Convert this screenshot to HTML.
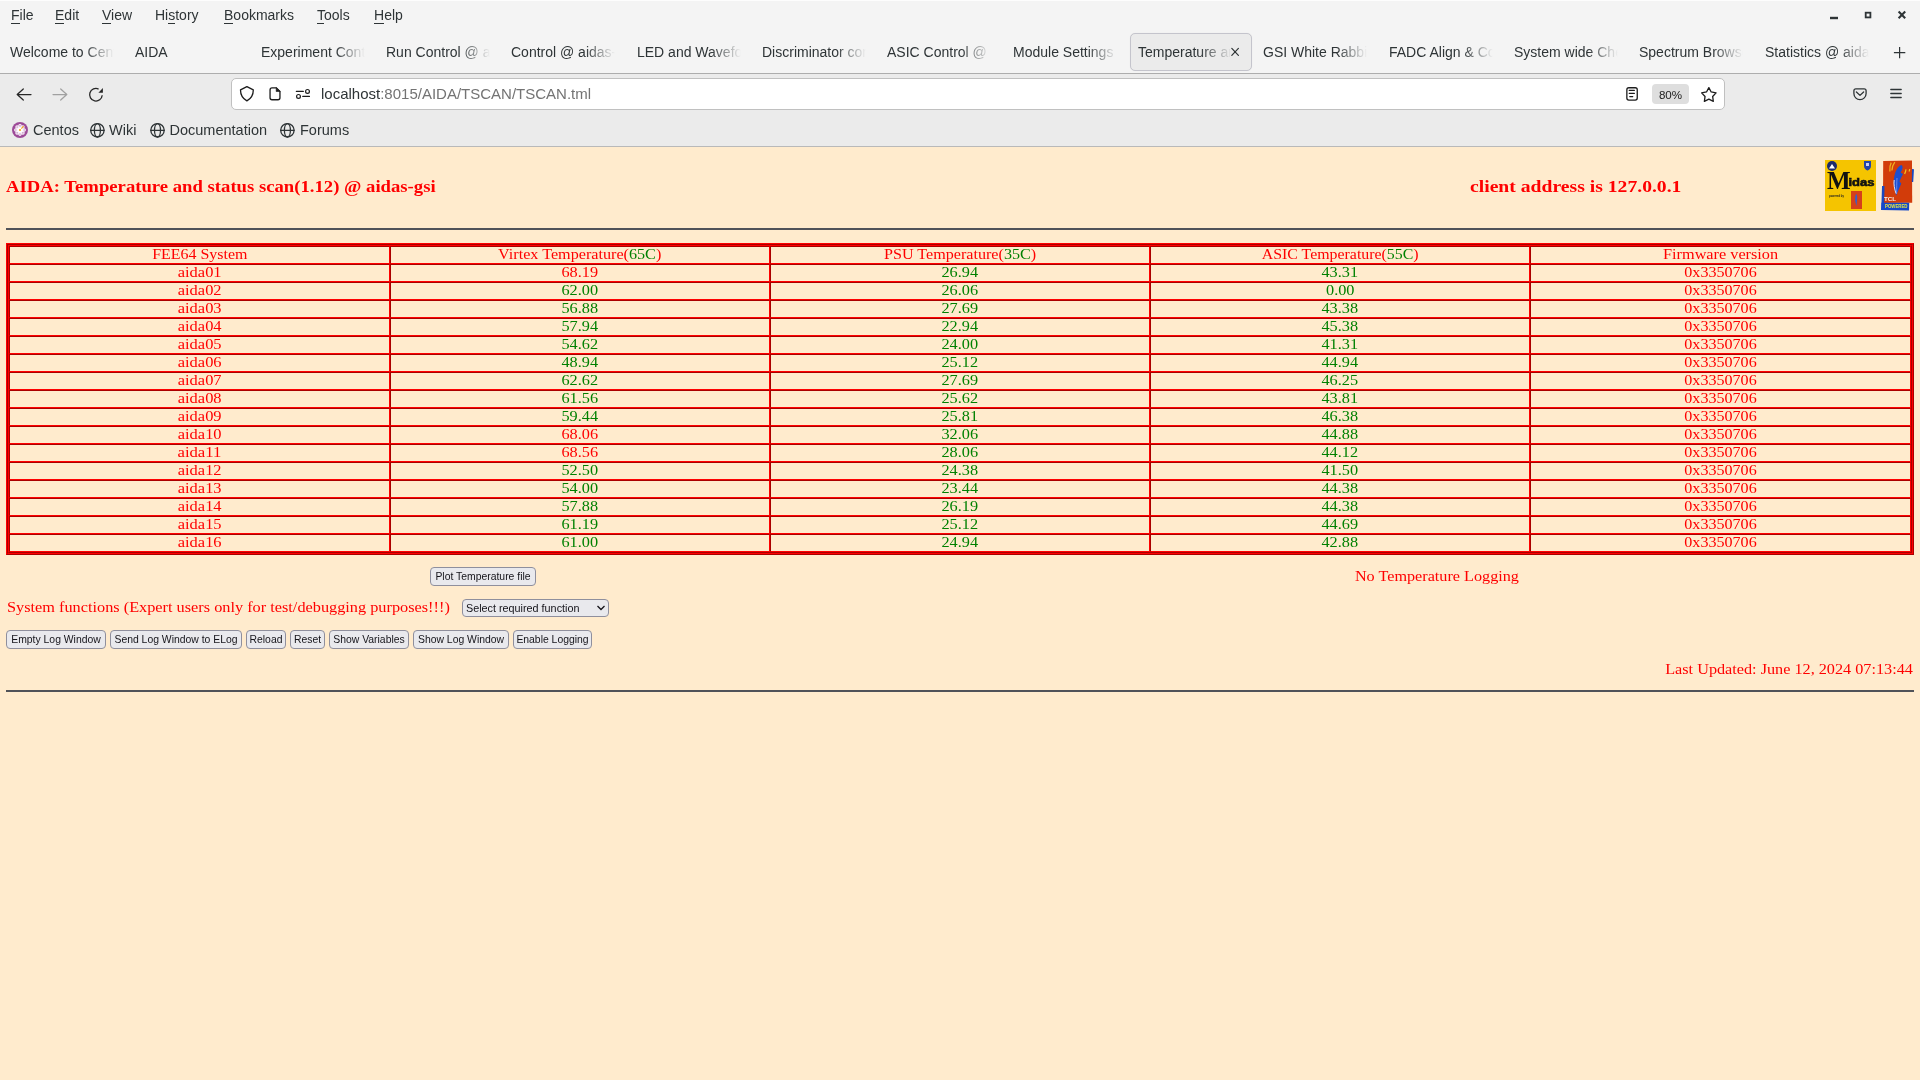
<!DOCTYPE html>
<html><head><meta charset="utf-8">
<style>
*{margin:0;padding:0;box-sizing:border-box}
html,body{width:1920px;height:1080px;overflow:hidden;background:#ffebcd;font-family:"Liberation Sans",sans-serif}
.a{position:absolute;white-space:nowrap}
#wrap{position:absolute;left:0;top:0;width:1920px;height:1080px;will-change:transform}
#top{position:absolute;left:0;top:0;width:1920px;height:73px;background:#f4f4f4}
#l1{position:absolute;left:0;top:73px;width:1920px;height:1px;background:#adadad}
#nav{position:absolute;left:0;top:74px;width:1920px;height:72px;background:#ebebeb}
#l2{position:absolute;left:0;top:146px;width:1920px;height:1px;background:#b9b9b9}
.menu{font-size:14px;color:#2e3436;top:4px;line-height:20px}
.menu u{text-decoration:none;border-bottom:1px solid #2e3436}
.tab{font-size:14px;color:#2e3436;top:42px;line-height:20px;overflow:hidden;width:106px;
 -webkit-mask-image:linear-gradient(to right,#000 74px,transparent 104px)}
.bm{font-size:14.5px;color:#2e3436;top:120px;line-height:20px}
.pg{font-family:"Liberation Serif",serif;color:#f00}
</style></head><body><div id="wrap">
<div id="top"></div><div class="a" style="left:0;top:0;width:1920px;height:1px;background:#fdfdfd"></div><div id="l1"></div><div id="nav"></div><div id="l2"></div>

<!-- menu -->
<div class="a menu" style="top:5px;left:11px"><u>F</u>ile</div>
<div class="a menu" style="top:5px;left:55px"><u>E</u>dit</div>
<div class="a menu" style="top:5px;left:102px"><u>V</u>iew</div>
<div class="a menu" style="top:5px;left:155px">Hi<u>s</u>tory</div>
<div class="a menu" style="top:5px;left:224px"><u>B</u>ookmarks</div>
<div class="a menu" style="top:5px;left:317px"><u>T</u>ools</div>
<div class="a menu" style="top:5px;left:374px"><u>H</u>elp</div>

<!-- window controls -->

<!-- tabs -->
<div class="a tab" style="left:10px">Welcome to CentOS</div>
<div class="a tab" style="left:135px">AIDA</div>
<div class="a tab" style="left:261px">Experiment Control</div>
<div class="a tab" style="left:386px">Run Control @ aidas</div>
<div class="a tab" style="left:511px">Control @ aidas-gsi</div>
<div class="a tab" style="left:637px">LED and Waveform</div>
<div class="a tab" style="left:762px">Discriminator control</div>
<div class="a tab" style="left:887px">ASIC Control @ aidas</div>
<div class="a tab" style="left:1013px">Module Settings @</div>
<div class="a" style="left:1130px;top:33px;width:122px;height:38px;border:1px solid #c4c4cc;border-radius:5px;background:#ebebeb;box-shadow:0 0 1px rgba(0,0,0,.08)"></div>
<div class="a tab" style="left:1138px;width:92px;-webkit-mask-image:linear-gradient(to right,#000 62px,transparent 94px)">Temperature and status</div>
<div class="a tab" style="left:1263px">GSI White Rabbit</div>
<div class="a tab" style="left:1389px">FADC Align &amp; Control</div>
<div class="a tab" style="left:1514px">System wide Checks</div>
<div class="a tab" style="left:1639px">Spectrum Browser</div>
<div class="a tab" style="left:1765px">Statistics @ aidas</div>

<!-- nav -->


<div class="a" style="left:231px;top:78px;width:1494px;height:32px;background:#fff;border:1px solid #c0c0c0;border-radius:5px"></div>
<div class="a" style="left:321px;top:84px;font-size:15px;line-height:20px;color:#2e3436">localhost<span style="color:#737373">:8015/AIDA/TSCAN/TSCAN.tml</span></div>

<div class="a" style="left:1652px;top:84px;width:37px;height:20px;background:#dedede;border-radius:4px;font-size:11.6px;line-height:22px;text-align:center;color:#1c1c1c">80%</div>

<!-- bookmarks -->
<div class="a bm" style="left:33px">Centos</div>
<div class="a bm" style="left:109px">Wiki</div>
<div class="a bm" style="left:169.5px">Documentation</div>
<div class="a bm" style="left:300px">Forums</div>
<svg class="a" style="left:0;top:0" width="1920" height="147" viewBox="0 0 1920 147">
<g fill="none" stroke-linecap="round" stroke-linejoin="round">
<rect x="1830" y="16.8" width="8" height="2.4" fill="#2e3436" stroke="none"/>
<rect x="1865.7" y="12.7" width="4.7" height="4.7" stroke="#2e3436" stroke-width="1.8" stroke-linecap="butt" stroke-linejoin="miter"/>
<path d="M1898.6 11.6L1905.2 18.2M1905.2 11.6L1898.6 18.2" stroke="#2e3436" stroke-width="2.1" stroke-linecap="butt"/>
<path d="M1231.8 48.4L1238.4 55.4M1238.4 48.4L1231.8 55.4" stroke="#2e3436" stroke-width="1.2"/>
<path d="M1899.6 47V58.3M1893.9 52.6H1905.3" stroke="#2e3436" stroke-width="1.2" stroke-linecap="butt"/>
<path d="M17.2 94.5H31M23.3 89L17.2 94.5L23.3 100" stroke="#262626" stroke-width="1.25"/>
<path d="M53 94.5H66.8M60.7 89L66.8 94.5L60.7 100" stroke="#a0a0a0" stroke-width="1.25"/>
<path d="M102.2 95.3A6.3 6.3 0 1 1 98.6 89.05" stroke="#262626" stroke-width="1.3" stroke-linecap="butt"/>
<path d="M98.4 92.7L102.9 88V92.7Z" fill="#262626" stroke="none"/>
<path d="M246.9 86.6L253.3 89.9C253.3 95 251 98.5 246.9 100.9C242.8 98.5 240.5 95 240.5 89.9Z" stroke="#1c1c1c" stroke-width="1.3"/>
<path d="M272.05 87.9H276.4L279.95 91.4V97.75Q279.95 99.75 277.95 99.75H272.05Q270.05 99.75 270.05 97.75V89.9Q270.05 87.9 272.05 87.9Z" stroke="#1c1c1c" stroke-width="1.3"/>
<path d="M276.2 87.9V91.5H279.95Z" fill="#1c1c1c" stroke="#1c1c1c" stroke-width="0.6"/>
<path d="M296.4 91.4H303.3M302.8 96.4H309.4" stroke="#1c1c1c" stroke-width="1.3"/>
<circle cx="307.5" cy="91.4" r="1.9" stroke="#1c1c1c" stroke-width="1.2"/>
<circle cx="298.5" cy="96.4" r="1.9" stroke="#1c1c1c" stroke-width="1.2"/>
<rect x="1626.85" y="87.75" width="10.4" height="12.3" rx="2" stroke="#1c1c1c" stroke-width="1.3"/>
<path d="M1629.2 90.4H1634.4M1629.2 93.4H1634.4M1629.7 96.6H1632.8" stroke="#1c1c1c" stroke-width="1.1"/>
<path d="M1708.85 87.60 L1711.20 91.96 L1716.08 92.85 L1712.65 96.44 L1713.32 101.35 L1708.85 99.20 L1704.38 101.35 L1705.05 96.44 L1701.62 92.85 L1706.50 91.96Z" stroke="#1c1c1c" stroke-width="1.3"/>
<path d="M1853.9 90.8Q1853.9 88.8 1855.9 88.8H1864.1Q1866.1 88.8 1866.1 90.8V93.6A6.1 6.1 0 0 1 1853.9 93.6Z" stroke="#2e3436" stroke-width="1.3"/>
<path d="M1856.4 92L1860 95.4L1863.6 92" stroke="#2e3436" stroke-width="1.3"/>
<path d="M1890.8 89.5H1901.2M1890.8 93.5H1901.2M1890.8 97.5H1901.2" stroke="#2e3436" stroke-width="1.3"/>
<g stroke="#2e3436" stroke-width="1.3"><circle cx="97.4" cy="130.3" r="6.7"/><ellipse cx="97.4" cy="130.3" rx="3" ry="6.7"/><path d="M90.7 130.3H104.10000000000001"/><circle cx="157.5" cy="130.3" r="6.7"/><ellipse cx="157.5" cy="130.3" rx="3" ry="6.7"/><path d="M150.8 130.3H164.2"/><circle cx="287.4" cy="130.3" r="6.7"/><ellipse cx="287.4" cy="130.3" rx="3" ry="6.7"/><path d="M280.7 130.3H294.09999999999997"/></g>
</g>
<circle cx="20" cy="130" r="8" fill="#9d4b98"/>
<circle cx="24.10" cy="130.00" r="1.8" fill="#fff"/><circle cx="22.90" cy="132.90" r="1.8" fill="#fff"/><circle cx="20.00" cy="134.10" r="1.8" fill="#fff"/><circle cx="17.10" cy="132.90" r="1.8" fill="#fff"/><circle cx="15.90" cy="130.00" r="1.8" fill="#fff"/><circle cx="17.10" cy="127.10" r="1.8" fill="#fff"/><circle cx="20.00" cy="125.90" r="1.8" fill="#fff"/><circle cx="22.90" cy="127.10" r="1.8" fill="#fff"/><circle cx="20" cy="130" r="3.0" fill="#fff"/><circle cx="24.10" cy="130.00" r="0.8" fill="#c08ac0"/><circle cx="22.90" cy="132.90" r="0.8" fill="#c08ac0"/><circle cx="20.00" cy="134.10" r="0.8" fill="#c08ac0"/><circle cx="17.10" cy="132.90" r="0.8" fill="#c08ac0"/><circle cx="15.90" cy="130.00" r="0.8" fill="#c08ac0"/><circle cx="17.10" cy="127.10" r="0.8" fill="#c08ac0"/><circle cx="20.00" cy="125.90" r="0.8" fill="#c08ac0"/><circle cx="22.90" cy="127.10" r="0.8" fill="#c08ac0"/>
<circle cx="20" cy="130" r="1.1" fill="#f0a820"/><path d="M21.3 128.7L23.6 126.2" stroke="#f0a820" stroke-width="1.1"/>
</svg>
<!-- PAGE -->
<div class="a pg" style="top:176.78px;font-size:16.5px;line-height:20px;color:#ff0000;font-weight:bold;left:6px;"><span style="display:inline-block;transform:scaleX(1.1323);transform-origin:left">AIDA: Temperature and status scan(1.12) @ aidas-gsi</span></div>
<div class="a pg" style="top:176.78px;font-size:16.5px;line-height:20px;color:#ff0000;font-weight:bold;left:1470px;"><span style="display:inline-block;transform:scaleX(1.1909);transform-origin:left">client address is 127.0.0.1</span></div>
<svg class="a" style="left:1825px;top:160px" width="51" height="51" viewBox="0 0 51 51">
<rect width="51" height="51" fill="#f5c400"/>
<circle cx="7" cy="6" r="5" fill="#1c2b6b"/><path d="M4 8.5L7 4L10 8.5Z" fill="#fff"/>
<path d="M39 1H46V6C46 8.5 44 10 42.5 10.5C41 10 39 8.5 39 6Z" fill="#2244a8"/><path d="M41 3H44V6H41Z" fill="#c8d0f0"/>
<text x="2" y="29" font-family="Liberation Serif" font-weight="bold" font-size="25" fill="#111">M</text>
<text x="23.5" y="26" font-family="Liberation Sans" font-weight="bold" font-size="11" fill="#111" stroke="#111" stroke-width="0.6" textLength="26" lengthAdjust="spacingAndGlyphs">idas</text>
<text x="4" y="36.5" font-family="Liberation Sans" font-weight="bold" font-size="3.6" fill="#222" textLength="15" lengthAdjust="spacingAndGlyphs">powered by</text>
<rect x="26" y="31" width="11" height="18" fill="#d5401a"/>
<path d="M31 34C33 35 32 40 31.5 46C30 42 29.5 37 31 34Z" fill="#3060d0"/>
</svg>
<svg class="a" style="left:1878px;top:156px" width="40" height="58" viewBox="0 0 40 58">
<path d="M5.2 4.9L34 4.6L34.2 46.8L5 47Z" fill="#d23c0a"/>
<path d="M4 30L6.5 30L6.2 47L3.5 47Z" fill="#1a48c0"/>
<path d="M34 13L36 13.2L35.2 26L33.8 26Z" fill="#1a48c0"/>
<path d="M13.2 6.6Q11.4 10 11.9 15.5M16.8 6.2Q14.2 9.5 13.9 14.5" stroke="#f0b020" stroke-width="1.3" fill="none"/>
<path d="M28 13.4C27.8 15 27.3 16.5 26.6 18M31.7 13C31.6 14 31.4 14.8 31 15.6" stroke="#f4c020" stroke-width="1.2" fill="none"/>
<path d="M23.2 9C25.6 10 24.6 13.5 22.6 16.5L25 18C23.5 21 22 23.5 21.5 25.5L23.3 27.5C21.8 31 19.8 35 18.3 39.5C16.6 35 15.6 30 15.8 25C16.2 18 18.4 11.5 23.2 9Z" fill="#1c4ed0"/>
<path d="M16.2 24C15.5 28 16.5 33 18 37.5" stroke="#f4f0f0" stroke-width="0.9" fill="none"/>
<path d="M19 22C18.6 27 18.8 32 18.6 38" stroke="#9ab0ff" stroke-width="0.6" fill="none"/>
<text x="6" y="44.7" font-family="Liberation Sans" font-weight="bold" font-size="6" fill="#f8eee8" textLength="12" lengthAdjust="spacingAndGlyphs">TCL</text>
<path d="M3.2 46.8L31.2 46.8L31 54.5L3 54Z" fill="#1448c8"/>
<text x="7" y="52.2" font-family="Liberation Sans" font-weight="bold" font-size="5" fill="#e8e840" textLength="22.5" lengthAdjust="spacingAndGlyphs">POWERED</text>
</svg>
<div class="a" style="left:6px;top:243px;width:1908px;height:312px;border-style:solid;border-width:1px;border-color:#ff0000 #aa0000 #aa0000 #ff0000"></div>
<div class="a" style="left:7px;top:244px;width:1906px;height:310px;border-style:solid;border-width:1px;border-color:#aa0000 #ff0000 #ff0000 #aa0000"></div>
<div class="a" style="left:8px;top:245px;width:1904px;height:308px;border-style:solid;border-width:1px;border-color:#ff0000 #aa0000 #aa0000 #ff0000"></div>
<div class="a" style="left:9px;top:246px;width:381px;height:18px;border-style:solid;border-width:1px;border-color:#aa0000 #ff0000 #ff0000 #aa0000"></div><div class="a" style="left:390px;top:246px;width:380px;height:18px;border-style:solid;border-width:1px;border-color:#aa0000 #ff0000 #ff0000 #aa0000"></div><div class="a" style="left:770px;top:246px;width:380px;height:18px;border-style:solid;border-width:1px;border-color:#aa0000 #ff0000 #ff0000 #aa0000"></div><div class="a" style="left:1150px;top:246px;width:380px;height:18px;border-style:solid;border-width:1px;border-color:#aa0000 #ff0000 #ff0000 #aa0000"></div><div class="a" style="left:1530px;top:246px;width:381px;height:18px;border-style:solid;border-width:1px;border-color:#aa0000 #ff0000 #ff0000 #aa0000"></div><div class="a" style="left:9px;top:264px;width:381px;height:18px;border-style:solid;border-width:1px;border-color:#aa0000 #ff0000 #ff0000 #aa0000"></div><div class="a" style="left:390px;top:264px;width:380px;height:18px;border-style:solid;border-width:1px;border-color:#aa0000 #ff0000 #ff0000 #aa0000"></div><div class="a" style="left:770px;top:264px;width:380px;height:18px;border-style:solid;border-width:1px;border-color:#aa0000 #ff0000 #ff0000 #aa0000"></div><div class="a" style="left:1150px;top:264px;width:380px;height:18px;border-style:solid;border-width:1px;border-color:#aa0000 #ff0000 #ff0000 #aa0000"></div><div class="a" style="left:1530px;top:264px;width:381px;height:18px;border-style:solid;border-width:1px;border-color:#aa0000 #ff0000 #ff0000 #aa0000"></div><div class="a" style="left:9px;top:282px;width:381px;height:18px;border-style:solid;border-width:1px;border-color:#aa0000 #ff0000 #ff0000 #aa0000"></div><div class="a" style="left:390px;top:282px;width:380px;height:18px;border-style:solid;border-width:1px;border-color:#aa0000 #ff0000 #ff0000 #aa0000"></div><div class="a" style="left:770px;top:282px;width:380px;height:18px;border-style:solid;border-width:1px;border-color:#aa0000 #ff0000 #ff0000 #aa0000"></div><div class="a" style="left:1150px;top:282px;width:380px;height:18px;border-style:solid;border-width:1px;border-color:#aa0000 #ff0000 #ff0000 #aa0000"></div><div class="a" style="left:1530px;top:282px;width:381px;height:18px;border-style:solid;border-width:1px;border-color:#aa0000 #ff0000 #ff0000 #aa0000"></div><div class="a" style="left:9px;top:300px;width:381px;height:18px;border-style:solid;border-width:1px;border-color:#aa0000 #ff0000 #ff0000 #aa0000"></div><div class="a" style="left:390px;top:300px;width:380px;height:18px;border-style:solid;border-width:1px;border-color:#aa0000 #ff0000 #ff0000 #aa0000"></div><div class="a" style="left:770px;top:300px;width:380px;height:18px;border-style:solid;border-width:1px;border-color:#aa0000 #ff0000 #ff0000 #aa0000"></div><div class="a" style="left:1150px;top:300px;width:380px;height:18px;border-style:solid;border-width:1px;border-color:#aa0000 #ff0000 #ff0000 #aa0000"></div><div class="a" style="left:1530px;top:300px;width:381px;height:18px;border-style:solid;border-width:1px;border-color:#aa0000 #ff0000 #ff0000 #aa0000"></div><div class="a" style="left:9px;top:318px;width:381px;height:18px;border-style:solid;border-width:1px;border-color:#aa0000 #ff0000 #ff0000 #aa0000"></div><div class="a" style="left:390px;top:318px;width:380px;height:18px;border-style:solid;border-width:1px;border-color:#aa0000 #ff0000 #ff0000 #aa0000"></div><div class="a" style="left:770px;top:318px;width:380px;height:18px;border-style:solid;border-width:1px;border-color:#aa0000 #ff0000 #ff0000 #aa0000"></div><div class="a" style="left:1150px;top:318px;width:380px;height:18px;border-style:solid;border-width:1px;border-color:#aa0000 #ff0000 #ff0000 #aa0000"></div><div class="a" style="left:1530px;top:318px;width:381px;height:18px;border-style:solid;border-width:1px;border-color:#aa0000 #ff0000 #ff0000 #aa0000"></div><div class="a" style="left:9px;top:336px;width:381px;height:18px;border-style:solid;border-width:1px;border-color:#aa0000 #ff0000 #ff0000 #aa0000"></div><div class="a" style="left:390px;top:336px;width:380px;height:18px;border-style:solid;border-width:1px;border-color:#aa0000 #ff0000 #ff0000 #aa0000"></div><div class="a" style="left:770px;top:336px;width:380px;height:18px;border-style:solid;border-width:1px;border-color:#aa0000 #ff0000 #ff0000 #aa0000"></div><div class="a" style="left:1150px;top:336px;width:380px;height:18px;border-style:solid;border-width:1px;border-color:#aa0000 #ff0000 #ff0000 #aa0000"></div><div class="a" style="left:1530px;top:336px;width:381px;height:18px;border-style:solid;border-width:1px;border-color:#aa0000 #ff0000 #ff0000 #aa0000"></div><div class="a" style="left:9px;top:354px;width:381px;height:18px;border-style:solid;border-width:1px;border-color:#aa0000 #ff0000 #ff0000 #aa0000"></div><div class="a" style="left:390px;top:354px;width:380px;height:18px;border-style:solid;border-width:1px;border-color:#aa0000 #ff0000 #ff0000 #aa0000"></div><div class="a" style="left:770px;top:354px;width:380px;height:18px;border-style:solid;border-width:1px;border-color:#aa0000 #ff0000 #ff0000 #aa0000"></div><div class="a" style="left:1150px;top:354px;width:380px;height:18px;border-style:solid;border-width:1px;border-color:#aa0000 #ff0000 #ff0000 #aa0000"></div><div class="a" style="left:1530px;top:354px;width:381px;height:18px;border-style:solid;border-width:1px;border-color:#aa0000 #ff0000 #ff0000 #aa0000"></div><div class="a" style="left:9px;top:372px;width:381px;height:18px;border-style:solid;border-width:1px;border-color:#aa0000 #ff0000 #ff0000 #aa0000"></div><div class="a" style="left:390px;top:372px;width:380px;height:18px;border-style:solid;border-width:1px;border-color:#aa0000 #ff0000 #ff0000 #aa0000"></div><div class="a" style="left:770px;top:372px;width:380px;height:18px;border-style:solid;border-width:1px;border-color:#aa0000 #ff0000 #ff0000 #aa0000"></div><div class="a" style="left:1150px;top:372px;width:380px;height:18px;border-style:solid;border-width:1px;border-color:#aa0000 #ff0000 #ff0000 #aa0000"></div><div class="a" style="left:1530px;top:372px;width:381px;height:18px;border-style:solid;border-width:1px;border-color:#aa0000 #ff0000 #ff0000 #aa0000"></div><div class="a" style="left:9px;top:390px;width:381px;height:18px;border-style:solid;border-width:1px;border-color:#aa0000 #ff0000 #ff0000 #aa0000"></div><div class="a" style="left:390px;top:390px;width:380px;height:18px;border-style:solid;border-width:1px;border-color:#aa0000 #ff0000 #ff0000 #aa0000"></div><div class="a" style="left:770px;top:390px;width:380px;height:18px;border-style:solid;border-width:1px;border-color:#aa0000 #ff0000 #ff0000 #aa0000"></div><div class="a" style="left:1150px;top:390px;width:380px;height:18px;border-style:solid;border-width:1px;border-color:#aa0000 #ff0000 #ff0000 #aa0000"></div><div class="a" style="left:1530px;top:390px;width:381px;height:18px;border-style:solid;border-width:1px;border-color:#aa0000 #ff0000 #ff0000 #aa0000"></div><div class="a" style="left:9px;top:408px;width:381px;height:18px;border-style:solid;border-width:1px;border-color:#aa0000 #ff0000 #ff0000 #aa0000"></div><div class="a" style="left:390px;top:408px;width:380px;height:18px;border-style:solid;border-width:1px;border-color:#aa0000 #ff0000 #ff0000 #aa0000"></div><div class="a" style="left:770px;top:408px;width:380px;height:18px;border-style:solid;border-width:1px;border-color:#aa0000 #ff0000 #ff0000 #aa0000"></div><div class="a" style="left:1150px;top:408px;width:380px;height:18px;border-style:solid;border-width:1px;border-color:#aa0000 #ff0000 #ff0000 #aa0000"></div><div class="a" style="left:1530px;top:408px;width:381px;height:18px;border-style:solid;border-width:1px;border-color:#aa0000 #ff0000 #ff0000 #aa0000"></div><div class="a" style="left:9px;top:426px;width:381px;height:18px;border-style:solid;border-width:1px;border-color:#aa0000 #ff0000 #ff0000 #aa0000"></div><div class="a" style="left:390px;top:426px;width:380px;height:18px;border-style:solid;border-width:1px;border-color:#aa0000 #ff0000 #ff0000 #aa0000"></div><div class="a" style="left:770px;top:426px;width:380px;height:18px;border-style:solid;border-width:1px;border-color:#aa0000 #ff0000 #ff0000 #aa0000"></div><div class="a" style="left:1150px;top:426px;width:380px;height:18px;border-style:solid;border-width:1px;border-color:#aa0000 #ff0000 #ff0000 #aa0000"></div><div class="a" style="left:1530px;top:426px;width:381px;height:18px;border-style:solid;border-width:1px;border-color:#aa0000 #ff0000 #ff0000 #aa0000"></div><div class="a" style="left:9px;top:444px;width:381px;height:18px;border-style:solid;border-width:1px;border-color:#aa0000 #ff0000 #ff0000 #aa0000"></div><div class="a" style="left:390px;top:444px;width:380px;height:18px;border-style:solid;border-width:1px;border-color:#aa0000 #ff0000 #ff0000 #aa0000"></div><div class="a" style="left:770px;top:444px;width:380px;height:18px;border-style:solid;border-width:1px;border-color:#aa0000 #ff0000 #ff0000 #aa0000"></div><div class="a" style="left:1150px;top:444px;width:380px;height:18px;border-style:solid;border-width:1px;border-color:#aa0000 #ff0000 #ff0000 #aa0000"></div><div class="a" style="left:1530px;top:444px;width:381px;height:18px;border-style:solid;border-width:1px;border-color:#aa0000 #ff0000 #ff0000 #aa0000"></div><div class="a" style="left:9px;top:462px;width:381px;height:18px;border-style:solid;border-width:1px;border-color:#aa0000 #ff0000 #ff0000 #aa0000"></div><div class="a" style="left:390px;top:462px;width:380px;height:18px;border-style:solid;border-width:1px;border-color:#aa0000 #ff0000 #ff0000 #aa0000"></div><div class="a" style="left:770px;top:462px;width:380px;height:18px;border-style:solid;border-width:1px;border-color:#aa0000 #ff0000 #ff0000 #aa0000"></div><div class="a" style="left:1150px;top:462px;width:380px;height:18px;border-style:solid;border-width:1px;border-color:#aa0000 #ff0000 #ff0000 #aa0000"></div><div class="a" style="left:1530px;top:462px;width:381px;height:18px;border-style:solid;border-width:1px;border-color:#aa0000 #ff0000 #ff0000 #aa0000"></div><div class="a" style="left:9px;top:480px;width:381px;height:18px;border-style:solid;border-width:1px;border-color:#aa0000 #ff0000 #ff0000 #aa0000"></div><div class="a" style="left:390px;top:480px;width:380px;height:18px;border-style:solid;border-width:1px;border-color:#aa0000 #ff0000 #ff0000 #aa0000"></div><div class="a" style="left:770px;top:480px;width:380px;height:18px;border-style:solid;border-width:1px;border-color:#aa0000 #ff0000 #ff0000 #aa0000"></div><div class="a" style="left:1150px;top:480px;width:380px;height:18px;border-style:solid;border-width:1px;border-color:#aa0000 #ff0000 #ff0000 #aa0000"></div><div class="a" style="left:1530px;top:480px;width:381px;height:18px;border-style:solid;border-width:1px;border-color:#aa0000 #ff0000 #ff0000 #aa0000"></div><div class="a" style="left:9px;top:498px;width:381px;height:18px;border-style:solid;border-width:1px;border-color:#aa0000 #ff0000 #ff0000 #aa0000"></div><div class="a" style="left:390px;top:498px;width:380px;height:18px;border-style:solid;border-width:1px;border-color:#aa0000 #ff0000 #ff0000 #aa0000"></div><div class="a" style="left:770px;top:498px;width:380px;height:18px;border-style:solid;border-width:1px;border-color:#aa0000 #ff0000 #ff0000 #aa0000"></div><div class="a" style="left:1150px;top:498px;width:380px;height:18px;border-style:solid;border-width:1px;border-color:#aa0000 #ff0000 #ff0000 #aa0000"></div><div class="a" style="left:1530px;top:498px;width:381px;height:18px;border-style:solid;border-width:1px;border-color:#aa0000 #ff0000 #ff0000 #aa0000"></div><div class="a" style="left:9px;top:516px;width:381px;height:18px;border-style:solid;border-width:1px;border-color:#aa0000 #ff0000 #ff0000 #aa0000"></div><div class="a" style="left:390px;top:516px;width:380px;height:18px;border-style:solid;border-width:1px;border-color:#aa0000 #ff0000 #ff0000 #aa0000"></div><div class="a" style="left:770px;top:516px;width:380px;height:18px;border-style:solid;border-width:1px;border-color:#aa0000 #ff0000 #ff0000 #aa0000"></div><div class="a" style="left:1150px;top:516px;width:380px;height:18px;border-style:solid;border-width:1px;border-color:#aa0000 #ff0000 #ff0000 #aa0000"></div><div class="a" style="left:1530px;top:516px;width:381px;height:18px;border-style:solid;border-width:1px;border-color:#aa0000 #ff0000 #ff0000 #aa0000"></div><div class="a" style="left:9px;top:534px;width:381px;height:18px;border-style:solid;border-width:1px;border-color:#aa0000 #ff0000 #ff0000 #aa0000"></div><div class="a" style="left:390px;top:534px;width:380px;height:18px;border-style:solid;border-width:1px;border-color:#aa0000 #ff0000 #ff0000 #aa0000"></div><div class="a" style="left:770px;top:534px;width:380px;height:18px;border-style:solid;border-width:1px;border-color:#aa0000 #ff0000 #ff0000 #aa0000"></div><div class="a" style="left:1150px;top:534px;width:380px;height:18px;border-style:solid;border-width:1px;border-color:#aa0000 #ff0000 #ff0000 #aa0000"></div><div class="a" style="left:1530px;top:534px;width:381px;height:18px;border-style:solid;border-width:1px;border-color:#aa0000 #ff0000 #ff0000 #aa0000"></div>
<div class="a pg" style="top:245.28px;font-size:14.0px;line-height:20px;color:#ff0000;left:-300.5px;width:1000px;text-align:center;"><span style="display:inline-block;transform:scaleX(1.1402);transform-origin:center">FEE64 System</span></div>
<div class="a pg" style="top:245.28px;font-size:14.0px;line-height:20px;color:#ff0000;left:80.0px;width:1000px;text-align:center;"><span style="display:inline-block;transform:scaleX(1.1542);transform-origin:center">Virtex Temperature(<span style="color:#008000">65C</span>)</span></div>
<div class="a pg" style="top:245.28px;font-size:14.0px;line-height:20px;color:#ff0000;left:460.0px;width:1000px;text-align:center;"><span style="display:inline-block;transform:scaleX(1.1516);transform-origin:center">PSU Temperature(<span style="color:#008000">35C</span>)</span></div>
<div class="a pg" style="top:245.28px;font-size:14.0px;line-height:20px;color:#ff0000;left:840.0px;width:1000px;text-align:center;"><span style="display:inline-block;transform:scaleX(1.1339);transform-origin:center">ASIC Temperature(<span style="color:#008000">55C</span>)</span></div>
<div class="a pg" style="top:245.28px;font-size:14.0px;line-height:20px;color:#ff0000;left:1220.5px;width:1000px;text-align:center;"><span style="display:inline-block;transform:scaleX(1.1611);transform-origin:center">Firmware version</span></div>
<div class="a pg" style="top:263.27px;font-size:14.0px;line-height:20px;color:#ff0000;left:-300.5px;width:1000px;text-align:center;"><span style="display:inline-block;transform:scaleX(1.1737);transform-origin:center">aida01</span></div>
<div class="a pg" style="top:263.27px;font-size:14.0px;line-height:20px;color:#ff0000;left:80.0px;width:1000px;text-align:center;"><span style="display:inline-block;transform:scaleX(1.1627);transform-origin:center">68.19</span></div>
<div class="a pg" style="top:263.27px;font-size:14.0px;line-height:20px;color:#008000;left:460.0px;width:1000px;text-align:center;"><span style="display:inline-block;transform:scaleX(1.1627);transform-origin:center">26.94</span></div>
<div class="a pg" style="top:263.27px;font-size:14.0px;line-height:20px;color:#008000;left:840.0px;width:1000px;text-align:center;"><span style="display:inline-block;transform:scaleX(1.1627);transform-origin:center">43.31</span></div>
<div class="a pg" style="top:263.27px;font-size:14.0px;line-height:20px;color:#ff0000;left:1220.5px;width:1000px;text-align:center;"><span style="display:inline-block;transform:scaleX(1.1483);transform-origin:center">0x3350706</span></div>
<div class="a pg" style="top:281.27px;font-size:14.0px;line-height:20px;color:#ff0000;left:-300.5px;width:1000px;text-align:center;"><span style="display:inline-block;transform:scaleX(1.1737);transform-origin:center">aida02</span></div>
<div class="a pg" style="top:281.27px;font-size:14.0px;line-height:20px;color:#008000;left:80.0px;width:1000px;text-align:center;"><span style="display:inline-block;transform:scaleX(1.1627);transform-origin:center">62.00</span></div>
<div class="a pg" style="top:281.27px;font-size:14.0px;line-height:20px;color:#008000;left:460.0px;width:1000px;text-align:center;"><span style="display:inline-block;transform:scaleX(1.1627);transform-origin:center">26.06</span></div>
<div class="a pg" style="top:281.27px;font-size:14.0px;line-height:20px;color:#008000;left:840.0px;width:1000px;text-align:center;"><span style="display:inline-block;transform:scaleX(1.1626);transform-origin:center">0.00</span></div>
<div class="a pg" style="top:281.27px;font-size:14.0px;line-height:20px;color:#ff0000;left:1220.5px;width:1000px;text-align:center;"><span style="display:inline-block;transform:scaleX(1.1483);transform-origin:center">0x3350706</span></div>
<div class="a pg" style="top:299.27px;font-size:14.0px;line-height:20px;color:#ff0000;left:-300.5px;width:1000px;text-align:center;"><span style="display:inline-block;transform:scaleX(1.1737);transform-origin:center">aida03</span></div>
<div class="a pg" style="top:299.27px;font-size:14.0px;line-height:20px;color:#008000;left:80.0px;width:1000px;text-align:center;"><span style="display:inline-block;transform:scaleX(1.1627);transform-origin:center">56.88</span></div>
<div class="a pg" style="top:299.27px;font-size:14.0px;line-height:20px;color:#008000;left:460.0px;width:1000px;text-align:center;"><span style="display:inline-block;transform:scaleX(1.1627);transform-origin:center">27.69</span></div>
<div class="a pg" style="top:299.27px;font-size:14.0px;line-height:20px;color:#008000;left:840.0px;width:1000px;text-align:center;"><span style="display:inline-block;transform:scaleX(1.1627);transform-origin:center">43.38</span></div>
<div class="a pg" style="top:299.27px;font-size:14.0px;line-height:20px;color:#ff0000;left:1220.5px;width:1000px;text-align:center;"><span style="display:inline-block;transform:scaleX(1.1483);transform-origin:center">0x3350706</span></div>
<div class="a pg" style="top:317.27px;font-size:14.0px;line-height:20px;color:#ff0000;left:-300.5px;width:1000px;text-align:center;"><span style="display:inline-block;transform:scaleX(1.1737);transform-origin:center">aida04</span></div>
<div class="a pg" style="top:317.27px;font-size:14.0px;line-height:20px;color:#008000;left:80.0px;width:1000px;text-align:center;"><span style="display:inline-block;transform:scaleX(1.1627);transform-origin:center">57.94</span></div>
<div class="a pg" style="top:317.27px;font-size:14.0px;line-height:20px;color:#008000;left:460.0px;width:1000px;text-align:center;"><span style="display:inline-block;transform:scaleX(1.1627);transform-origin:center">22.94</span></div>
<div class="a pg" style="top:317.27px;font-size:14.0px;line-height:20px;color:#008000;left:840.0px;width:1000px;text-align:center;"><span style="display:inline-block;transform:scaleX(1.1627);transform-origin:center">45.38</span></div>
<div class="a pg" style="top:317.27px;font-size:14.0px;line-height:20px;color:#ff0000;left:1220.5px;width:1000px;text-align:center;"><span style="display:inline-block;transform:scaleX(1.1483);transform-origin:center">0x3350706</span></div>
<div class="a pg" style="top:335.27px;font-size:14.0px;line-height:20px;color:#ff0000;left:-300.5px;width:1000px;text-align:center;"><span style="display:inline-block;transform:scaleX(1.1737);transform-origin:center">aida05</span></div>
<div class="a pg" style="top:335.27px;font-size:14.0px;line-height:20px;color:#008000;left:80.0px;width:1000px;text-align:center;"><span style="display:inline-block;transform:scaleX(1.1627);transform-origin:center">54.62</span></div>
<div class="a pg" style="top:335.27px;font-size:14.0px;line-height:20px;color:#008000;left:460.0px;width:1000px;text-align:center;"><span style="display:inline-block;transform:scaleX(1.1627);transform-origin:center">24.00</span></div>
<div class="a pg" style="top:335.27px;font-size:14.0px;line-height:20px;color:#008000;left:840.0px;width:1000px;text-align:center;"><span style="display:inline-block;transform:scaleX(1.1627);transform-origin:center">41.31</span></div>
<div class="a pg" style="top:335.27px;font-size:14.0px;line-height:20px;color:#ff0000;left:1220.5px;width:1000px;text-align:center;"><span style="display:inline-block;transform:scaleX(1.1483);transform-origin:center">0x3350706</span></div>
<div class="a pg" style="top:353.27px;font-size:14.0px;line-height:20px;color:#ff0000;left:-300.5px;width:1000px;text-align:center;"><span style="display:inline-block;transform:scaleX(1.1737);transform-origin:center">aida06</span></div>
<div class="a pg" style="top:353.27px;font-size:14.0px;line-height:20px;color:#008000;left:80.0px;width:1000px;text-align:center;"><span style="display:inline-block;transform:scaleX(1.1627);transform-origin:center">48.94</span></div>
<div class="a pg" style="top:353.27px;font-size:14.0px;line-height:20px;color:#008000;left:460.0px;width:1000px;text-align:center;"><span style="display:inline-block;transform:scaleX(1.1627);transform-origin:center">25.12</span></div>
<div class="a pg" style="top:353.27px;font-size:14.0px;line-height:20px;color:#008000;left:840.0px;width:1000px;text-align:center;"><span style="display:inline-block;transform:scaleX(1.1627);transform-origin:center">44.94</span></div>
<div class="a pg" style="top:353.27px;font-size:14.0px;line-height:20px;color:#ff0000;left:1220.5px;width:1000px;text-align:center;"><span style="display:inline-block;transform:scaleX(1.1483);transform-origin:center">0x3350706</span></div>
<div class="a pg" style="top:371.27px;font-size:14.0px;line-height:20px;color:#ff0000;left:-300.5px;width:1000px;text-align:center;"><span style="display:inline-block;transform:scaleX(1.1737);transform-origin:center">aida07</span></div>
<div class="a pg" style="top:371.27px;font-size:14.0px;line-height:20px;color:#008000;left:80.0px;width:1000px;text-align:center;"><span style="display:inline-block;transform:scaleX(1.1627);transform-origin:center">62.62</span></div>
<div class="a pg" style="top:371.27px;font-size:14.0px;line-height:20px;color:#008000;left:460.0px;width:1000px;text-align:center;"><span style="display:inline-block;transform:scaleX(1.1627);transform-origin:center">27.69</span></div>
<div class="a pg" style="top:371.27px;font-size:14.0px;line-height:20px;color:#008000;left:840.0px;width:1000px;text-align:center;"><span style="display:inline-block;transform:scaleX(1.1627);transform-origin:center">46.25</span></div>
<div class="a pg" style="top:371.27px;font-size:14.0px;line-height:20px;color:#ff0000;left:1220.5px;width:1000px;text-align:center;"><span style="display:inline-block;transform:scaleX(1.1483);transform-origin:center">0x3350706</span></div>
<div class="a pg" style="top:389.27px;font-size:14.0px;line-height:20px;color:#ff0000;left:-300.5px;width:1000px;text-align:center;"><span style="display:inline-block;transform:scaleX(1.1737);transform-origin:center">aida08</span></div>
<div class="a pg" style="top:389.27px;font-size:14.0px;line-height:20px;color:#008000;left:80.0px;width:1000px;text-align:center;"><span style="display:inline-block;transform:scaleX(1.1627);transform-origin:center">61.56</span></div>
<div class="a pg" style="top:389.27px;font-size:14.0px;line-height:20px;color:#008000;left:460.0px;width:1000px;text-align:center;"><span style="display:inline-block;transform:scaleX(1.1627);transform-origin:center">25.62</span></div>
<div class="a pg" style="top:389.27px;font-size:14.0px;line-height:20px;color:#008000;left:840.0px;width:1000px;text-align:center;"><span style="display:inline-block;transform:scaleX(1.1627);transform-origin:center">43.81</span></div>
<div class="a pg" style="top:389.27px;font-size:14.0px;line-height:20px;color:#ff0000;left:1220.5px;width:1000px;text-align:center;"><span style="display:inline-block;transform:scaleX(1.1483);transform-origin:center">0x3350706</span></div>
<div class="a pg" style="top:407.27px;font-size:14.0px;line-height:20px;color:#ff0000;left:-300.5px;width:1000px;text-align:center;"><span style="display:inline-block;transform:scaleX(1.1737);transform-origin:center">aida09</span></div>
<div class="a pg" style="top:407.27px;font-size:14.0px;line-height:20px;color:#008000;left:80.0px;width:1000px;text-align:center;"><span style="display:inline-block;transform:scaleX(1.1627);transform-origin:center">59.44</span></div>
<div class="a pg" style="top:407.27px;font-size:14.0px;line-height:20px;color:#008000;left:460.0px;width:1000px;text-align:center;"><span style="display:inline-block;transform:scaleX(1.1627);transform-origin:center">25.81</span></div>
<div class="a pg" style="top:407.27px;font-size:14.0px;line-height:20px;color:#008000;left:840.0px;width:1000px;text-align:center;"><span style="display:inline-block;transform:scaleX(1.1627);transform-origin:center">46.38</span></div>
<div class="a pg" style="top:407.27px;font-size:14.0px;line-height:20px;color:#ff0000;left:1220.5px;width:1000px;text-align:center;"><span style="display:inline-block;transform:scaleX(1.1483);transform-origin:center">0x3350706</span></div>
<div class="a pg" style="top:425.27px;font-size:14.0px;line-height:20px;color:#ff0000;left:-300.5px;width:1000px;text-align:center;"><span style="display:inline-block;transform:scaleX(1.1737);transform-origin:center">aida10</span></div>
<div class="a pg" style="top:425.27px;font-size:14.0px;line-height:20px;color:#ff0000;left:80.0px;width:1000px;text-align:center;"><span style="display:inline-block;transform:scaleX(1.1627);transform-origin:center">68.06</span></div>
<div class="a pg" style="top:425.27px;font-size:14.0px;line-height:20px;color:#008000;left:460.0px;width:1000px;text-align:center;"><span style="display:inline-block;transform:scaleX(1.1627);transform-origin:center">32.06</span></div>
<div class="a pg" style="top:425.27px;font-size:14.0px;line-height:20px;color:#008000;left:840.0px;width:1000px;text-align:center;"><span style="display:inline-block;transform:scaleX(1.1627);transform-origin:center">44.88</span></div>
<div class="a pg" style="top:425.27px;font-size:14.0px;line-height:20px;color:#ff0000;left:1220.5px;width:1000px;text-align:center;"><span style="display:inline-block;transform:scaleX(1.1483);transform-origin:center">0x3350706</span></div>
<div class="a pg" style="top:443.27px;font-size:14.0px;line-height:20px;color:#ff0000;left:-300.5px;width:1000px;text-align:center;"><span style="display:inline-block;transform:scaleX(1.1902);transform-origin:center">aida11</span></div>
<div class="a pg" style="top:443.27px;font-size:14.0px;line-height:20px;color:#ff0000;left:80.0px;width:1000px;text-align:center;"><span style="display:inline-block;transform:scaleX(1.1627);transform-origin:center">68.56</span></div>
<div class="a pg" style="top:443.27px;font-size:14.0px;line-height:20px;color:#008000;left:460.0px;width:1000px;text-align:center;"><span style="display:inline-block;transform:scaleX(1.1627);transform-origin:center">28.06</span></div>
<div class="a pg" style="top:443.27px;font-size:14.0px;line-height:20px;color:#008000;left:840.0px;width:1000px;text-align:center;"><span style="display:inline-block;transform:scaleX(1.1627);transform-origin:center">44.12</span></div>
<div class="a pg" style="top:443.27px;font-size:14.0px;line-height:20px;color:#ff0000;left:1220.5px;width:1000px;text-align:center;"><span style="display:inline-block;transform:scaleX(1.1483);transform-origin:center">0x3350706</span></div>
<div class="a pg" style="top:461.27px;font-size:14.0px;line-height:20px;color:#ff0000;left:-300.5px;width:1000px;text-align:center;"><span style="display:inline-block;transform:scaleX(1.1737);transform-origin:center">aida12</span></div>
<div class="a pg" style="top:461.27px;font-size:14.0px;line-height:20px;color:#008000;left:80.0px;width:1000px;text-align:center;"><span style="display:inline-block;transform:scaleX(1.1627);transform-origin:center">52.50</span></div>
<div class="a pg" style="top:461.27px;font-size:14.0px;line-height:20px;color:#008000;left:460.0px;width:1000px;text-align:center;"><span style="display:inline-block;transform:scaleX(1.1627);transform-origin:center">24.38</span></div>
<div class="a pg" style="top:461.27px;font-size:14.0px;line-height:20px;color:#008000;left:840.0px;width:1000px;text-align:center;"><span style="display:inline-block;transform:scaleX(1.1627);transform-origin:center">41.50</span></div>
<div class="a pg" style="top:461.27px;font-size:14.0px;line-height:20px;color:#ff0000;left:1220.5px;width:1000px;text-align:center;"><span style="display:inline-block;transform:scaleX(1.1483);transform-origin:center">0x3350706</span></div>
<div class="a pg" style="top:479.27px;font-size:14.0px;line-height:20px;color:#ff0000;left:-300.5px;width:1000px;text-align:center;"><span style="display:inline-block;transform:scaleX(1.1737);transform-origin:center">aida13</span></div>
<div class="a pg" style="top:479.27px;font-size:14.0px;line-height:20px;color:#008000;left:80.0px;width:1000px;text-align:center;"><span style="display:inline-block;transform:scaleX(1.1627);transform-origin:center">54.00</span></div>
<div class="a pg" style="top:479.27px;font-size:14.0px;line-height:20px;color:#008000;left:460.0px;width:1000px;text-align:center;"><span style="display:inline-block;transform:scaleX(1.1627);transform-origin:center">23.44</span></div>
<div class="a pg" style="top:479.27px;font-size:14.0px;line-height:20px;color:#008000;left:840.0px;width:1000px;text-align:center;"><span style="display:inline-block;transform:scaleX(1.1627);transform-origin:center">44.38</span></div>
<div class="a pg" style="top:479.27px;font-size:14.0px;line-height:20px;color:#ff0000;left:1220.5px;width:1000px;text-align:center;"><span style="display:inline-block;transform:scaleX(1.1483);transform-origin:center">0x3350706</span></div>
<div class="a pg" style="top:497.27px;font-size:14.0px;line-height:20px;color:#ff0000;left:-300.5px;width:1000px;text-align:center;"><span style="display:inline-block;transform:scaleX(1.1737);transform-origin:center">aida14</span></div>
<div class="a pg" style="top:497.27px;font-size:14.0px;line-height:20px;color:#008000;left:80.0px;width:1000px;text-align:center;"><span style="display:inline-block;transform:scaleX(1.1627);transform-origin:center">57.88</span></div>
<div class="a pg" style="top:497.27px;font-size:14.0px;line-height:20px;color:#008000;left:460.0px;width:1000px;text-align:center;"><span style="display:inline-block;transform:scaleX(1.1627);transform-origin:center">26.19</span></div>
<div class="a pg" style="top:497.27px;font-size:14.0px;line-height:20px;color:#008000;left:840.0px;width:1000px;text-align:center;"><span style="display:inline-block;transform:scaleX(1.1627);transform-origin:center">44.38</span></div>
<div class="a pg" style="top:497.27px;font-size:14.0px;line-height:20px;color:#ff0000;left:1220.5px;width:1000px;text-align:center;"><span style="display:inline-block;transform:scaleX(1.1483);transform-origin:center">0x3350706</span></div>
<div class="a pg" style="top:515.27px;font-size:14.0px;line-height:20px;color:#ff0000;left:-300.5px;width:1000px;text-align:center;"><span style="display:inline-block;transform:scaleX(1.1737);transform-origin:center">aida15</span></div>
<div class="a pg" style="top:515.27px;font-size:14.0px;line-height:20px;color:#008000;left:80.0px;width:1000px;text-align:center;"><span style="display:inline-block;transform:scaleX(1.1627);transform-origin:center">61.19</span></div>
<div class="a pg" style="top:515.27px;font-size:14.0px;line-height:20px;color:#008000;left:460.0px;width:1000px;text-align:center;"><span style="display:inline-block;transform:scaleX(1.1627);transform-origin:center">25.12</span></div>
<div class="a pg" style="top:515.27px;font-size:14.0px;line-height:20px;color:#008000;left:840.0px;width:1000px;text-align:center;"><span style="display:inline-block;transform:scaleX(1.1627);transform-origin:center">44.69</span></div>
<div class="a pg" style="top:515.27px;font-size:14.0px;line-height:20px;color:#ff0000;left:1220.5px;width:1000px;text-align:center;"><span style="display:inline-block;transform:scaleX(1.1483);transform-origin:center">0x3350706</span></div>
<div class="a pg" style="top:533.27px;font-size:14.0px;line-height:20px;color:#ff0000;left:-300.5px;width:1000px;text-align:center;"><span style="display:inline-block;transform:scaleX(1.1737);transform-origin:center">aida16</span></div>
<div class="a pg" style="top:533.27px;font-size:14.0px;line-height:20px;color:#008000;left:80.0px;width:1000px;text-align:center;"><span style="display:inline-block;transform:scaleX(1.1627);transform-origin:center">61.00</span></div>
<div class="a pg" style="top:533.27px;font-size:14.0px;line-height:20px;color:#008000;left:460.0px;width:1000px;text-align:center;"><span style="display:inline-block;transform:scaleX(1.1627);transform-origin:center">24.94</span></div>
<div class="a pg" style="top:533.27px;font-size:14.0px;line-height:20px;color:#008000;left:840.0px;width:1000px;text-align:center;"><span style="display:inline-block;transform:scaleX(1.1627);transform-origin:center">42.88</span></div>
<div class="a pg" style="top:533.27px;font-size:14.0px;line-height:20px;color:#ff0000;left:1220.5px;width:1000px;text-align:center;"><span style="display:inline-block;transform:scaleX(1.1483);transform-origin:center">0x3350706</span></div>
<style>.btn{background:#e9e9ed;border:1px solid #8f8f9d;border-radius:4px;text-align:center;color:#15141a}</style>
<div class="a btn" style="left:430px;top:567px;width:106px;height:19px;font-size:10.4px;line-height:17px">Plot Temperature file</div>
<div class="a pg" style="top:566.77px;font-size:14.0px;line-height:20px;color:#ff0000;left:936.5px;width:1000px;text-align:center;"><span style="display:inline-block;transform:scaleX(1.1561);transform-origin:center">No Temperature Logging</span></div>
<div class="a pg" style="top:598.38px;font-size:14.0px;line-height:20px;color:#ff0000;left:7px;"><span style="display:inline-block;transform:scaleX(1.1633);transform-origin:left">System functions (Expert users only for test/debugging purposes!!!)</span></div>
<div class="a btn" style="left:462px;top:599px;width:147px;height:18px;font-size:10.8px;line-height:16px;text-align:left;padding-left:3px">Select required function</div>
<svg class="a" style="left:596px;top:604px" width="10" height="8" viewBox="0 0 10 8"><path d="M1.5 2L5 5.5L8.5 2" fill="none" stroke="#15141a" stroke-width="1.3"/></svg>
<div class="a btn" style="left:6px;top:630px;width:100px;height:19px;font-size:10.4px;line-height:17px">Empty Log Window</div>
<div class="a btn" style="left:110px;top:630px;width:132px;height:19px;font-size:10.4px;line-height:17px">Send Log Window to ELog</div>
<div class="a btn" style="left:246px;top:630px;width:40px;height:19px;font-size:10.4px;line-height:17px">Reload</div>
<div class="a btn" style="left:290px;top:630px;width:35px;height:19px;font-size:10.4px;line-height:17px">Reset</div>
<div class="a btn" style="left:329px;top:630px;width:80px;height:19px;font-size:10.4px;line-height:17px">Show Variables</div>
<div class="a btn" style="left:413px;top:630px;width:96px;height:19px;font-size:10.4px;line-height:17px">Show Log Window</div>
<div class="a btn" style="left:513px;top:630px;width:79px;height:19px;font-size:10.4px;line-height:17px">Enable Logging</div>
<div class="a pg" style="top:660.27px;font-size:14.0px;line-height:20px;color:#ff0000;right:7px;"><span style="display:inline-block;transform:scaleX(1.1580);transform-origin:right">Last Updated: June 12, 2024 07:13:44</span></div>
<div class="a" style="left:6px;top:228px;width:1908px;height:2px;background:#505258"></div>
<div class="a" style="left:6px;top:690px;width:1908px;height:2px;background:#505258"></div>
</div></body></html>
